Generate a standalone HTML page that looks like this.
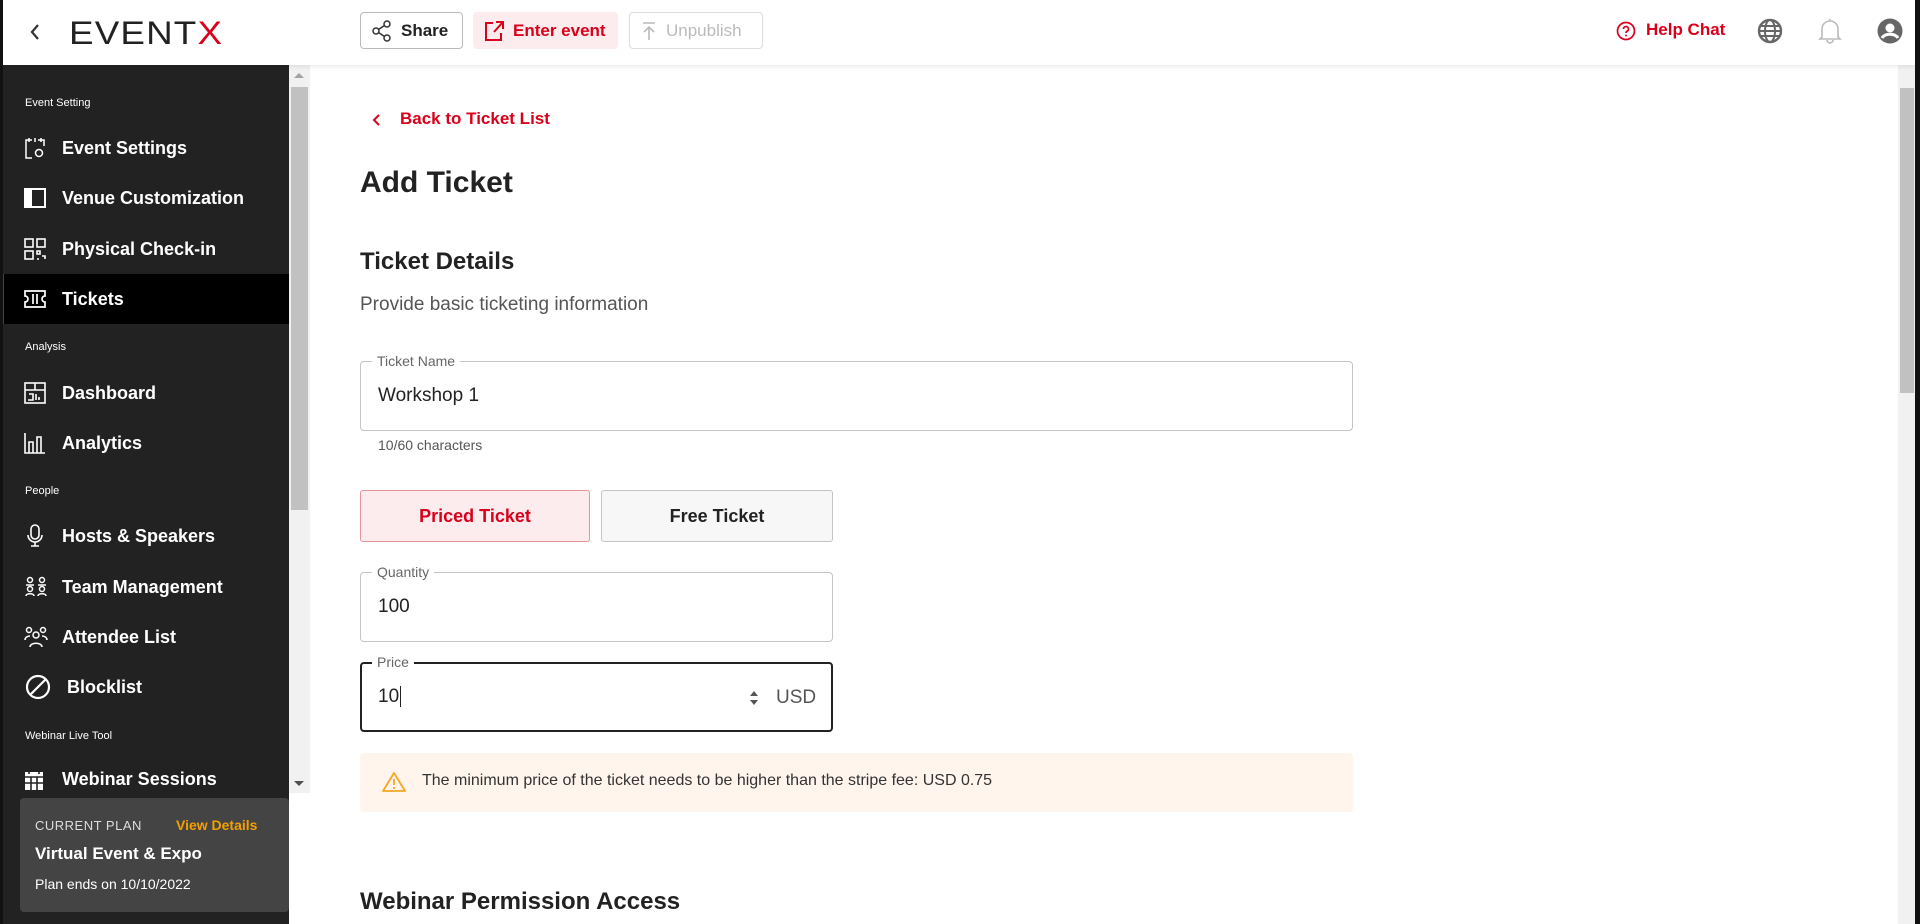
<!DOCTYPE html>
<html><head><meta charset="utf-8"><style>
*{box-sizing:border-box;margin:0;padding:0}
body{width:1920px;height:924px;overflow:hidden;background:#fff;font-family:"Liberation Sans",sans-serif;position:relative;color:#222}
.abs{position:absolute}
.hdr{left:0;top:0;width:1920px;height:65px;background:#fff;box-shadow:0 2px 4px rgba(0,0,0,.08);z-index:2}
.btn{position:absolute;top:12px;height:37px;border-radius:4px;display:flex;align-items:center;gap:9px;padding-left:11px;font-size:17px;font-weight:bold}
.side{left:0;top:65px;width:289px;height:859px;background:#222}
.sec{position:absolute;left:25px;color:#fff;font-size:11px}
.it{position:absolute;left:0;width:289px;height:50px;display:flex;align-items:center;color:#fff;font-weight:bold;font-size:18px}
.it svg{position:absolute;left:24px}
.it span{position:absolute;left:62px}
.field{position:absolute;border:1px solid #c4c4c4;border-radius:4px}
.lab{position:absolute;top:-9px;left:11px;background:#fff;padding:0 5px;font-size:14px;color:#666}
.val{position:absolute;left:17px;font-size:19px;color:#222}
</style></head><body>
<div class="abs" style="left:0;top:0;width:3px;height:924px;background:#111;z-index:5"></div>
<div class="abs" style="right:0;top:0;width:5px;height:924px;background:#111;z-index:5"></div>
<div class="abs hdr">
 <svg class="abs" style="left:28px;top:22px" width="14" height="20" viewBox="0 0 14 20"><path d="M10 3 L4 10 L10 17" fill="none" stroke="#333" stroke-width="2.2"/></svg>
 <div class="abs" style="left:69px;top:15px;font-size:32px;letter-spacing:1px;color:#222;font-weight:normal;transform:scaleX(1.15);transform-origin:left">EVENT<span style="color:#d9001b">X</span></div>
 <div class="btn" style="left:360px;width:103px;border:1px solid #bbb;color:#222"><svg width="20" height="22" viewBox="0 0 20 22"><circle cx="15" cy="4" r="3" fill="none" stroke="#333" stroke-width="1.5"/><circle cx="4" cy="11" r="3" fill="none" stroke="#333" stroke-width="1.5"/><circle cx="15" cy="18" r="3" fill="none" stroke="#333" stroke-width="1.5"/><path d="M6.5 9.5 L12.5 5.5 M6.5 12.5 L12.5 16.5" stroke="#333" stroke-width="1.5"/></svg>Share</div>
 <div class="btn" style="left:473px;width:145px;background:#fdecee;color:#d9001b"><svg width="20" height="22" viewBox="0 0 20 22"><path d="M9 3H2v17h15v-7" fill="none" stroke="#d9001b" stroke-width="2"/><path d="M10 12 L18 3 M12 2h7v7" fill="none" stroke="#d9001b" stroke-width="2"/></svg>Enter event</div>
 <div class="btn" style="left:629px;width:134px;border:1px solid #ddd;color:#bbb;font-weight:normal"><svg width="16" height="22" viewBox="0 0 16 22"><path d="M2 3h12M8 20V7M3 12l5-5 5 5" fill="none" stroke="#bbb" stroke-width="1.6"/></svg>Unpublish</div>
 <svg class="abs" style="left:1616px;top:21px" width="20" height="20" viewBox="0 0 20 20"><circle cx="10" cy="10" r="8.5" fill="none" stroke="#d9001b" stroke-width="1.7"/><path d="M7.5 8a2.5 2.5 0 1 1 3.5 2.3c-.8.4-1 .9-1 1.7" fill="none" stroke="#d9001b" stroke-width="1.7"/><circle cx="10" cy="14.5" r="1" fill="#d9001b"/></svg>
 <div class="abs" style="left:1646px;top:20px;font-size:17px;font-weight:bold;color:#d9001b">Help Chat</div>
 <svg class="abs" style="left:1757px;top:18px" width="26" height="26" viewBox="0 0 26 26"><circle cx="13" cy="13" r="11" fill="none" stroke="#666" stroke-width="2.4"/><ellipse cx="13" cy="13" rx="5" ry="11" fill="none" stroke="#666" stroke-width="2"/><path d="M2 13h22M4 8h18M4 18h18" stroke="#666" stroke-width="2"/></svg>
 <svg class="abs" style="left:1817px;top:17px" width="26" height="28" viewBox="0 0 26 28"><path d="M5 20V12a8 8 0 0 1 16 0v8l2 2H3z M13 2v2 M10 23a3 3 0 0 0 6 0" fill="none" stroke="#bbb" stroke-width="1.6"/></svg>
 <svg class="abs" style="left:1877px;top:18px" width="26" height="26" viewBox="0 0 26 26"><circle cx="13" cy="13" r="12.5" fill="#666"/><circle cx="13" cy="10" r="4.5" fill="#fff"/><path d="M5 20c3-5 13-5 16 0" fill="none" stroke="#fff" stroke-width="3"/></svg>
</div>

<div class="abs side">
 <div class="sec" style="top:32px">Event Setting</div>
 <div class="it" style="top:58px"><svg width="22" height="24" viewBox="0 0 22 24"><path d="M8 4H2v18h6 M14 4h6v6 M5 2v4 M11 2v4 M17 2v4" fill="none" stroke="#fff" stroke-width="1.5"/><circle cx="15" cy="17" r="3.5" fill="none" stroke="#fff" stroke-width="1.5"/></svg><span>Event Settings</span></div>
 <div class="it" style="top:108px"><svg width="22" height="22" viewBox="0 0 22 22"><rect x="1" y="2" width="20" height="18" fill="none" stroke="#fff" stroke-width="2"/><rect x="1" y="2" width="7" height="18" fill="#fff"/></svg><span>Venue Customization</span></div>
 <div class="it" style="top:159px"><svg width="22" height="22" viewBox="0 0 22 22"><g fill="none" stroke="#fff" stroke-width="1.6"><rect x="1" y="1" width="8" height="8"/><rect x="13" y="1" width="8" height="8"/><rect x="1" y="13" width="8" height="8"/><path d="M13 13h3v3h-3zM18 18h3v3M13 21h2"/></g></svg><span>Physical Check-in</span></div>
 <div class="it" style="top:209px;background:#000;border-left:4px solid #d9001b"><svg width="22" height="20" viewBox="0 0 22 20" style="left:20px"><path d="M1 2h20v5a3 3 0 0 0 0 6v5H1v-5a3 3 0 0 0 0-6z M9 5v10 M13 5v10" fill="none" stroke="#fff" stroke-width="1.7"/></svg><span style="left:58px">Tickets</span></div>
 <div class="sec" style="top:276px">Analysis</div>
 <div class="it" style="top:303px"><svg width="22" height="22" viewBox="0 0 22 22"><rect x="1" y="1" width="20" height="20" fill="none" stroke="#fff" stroke-width="1.6"/><path d="M1 8h20M11 1v7M5 12h4v6H4M12 12v6M15 15v3" fill="none" stroke="#fff" stroke-width="1.6"/></svg><span>Dashboard</span></div>
 <div class="it" style="top:353px"><svg width="22" height="22" viewBox="0 0 22 22"><path d="M1 1v20h20M5 21V10h4v11M13 21V5h4v16" fill="none" stroke="#fff" stroke-width="1.6"/></svg><span>Analytics</span></div>
 <div class="sec" style="top:420px">People</div>
 <div class="it" style="top:446px"><svg width="22" height="24" viewBox="0 0 22 24"><rect x="7" y="1" width="8" height="14" rx="4" fill="none" stroke="#fff" stroke-width="1.6"/><path d="M4 11a7 7 0 0 0 14 0M11 18v4M7 22h8" fill="none" stroke="#fff" stroke-width="1.6"/></svg><span>Hosts &amp; Speakers</span></div>
 <div class="it" style="top:497px"><svg width="24" height="22" viewBox="0 0 24 22"><g fill="none" stroke="#fff" stroke-width="1.5"><circle cx="6" cy="4" r="2.5"/><circle cx="18" cy="4" r="2.5"/><circle cx="6" cy="13" r="2.5"/><circle cx="18" cy="13" r="2.5"/><path d="M2 9h8M14 9h8M2 20c0-3 8-3 8 0M14 20c0-3 8-3 8 0"/></g></svg><span>Team Management</span></div>
 <div class="it" style="top:547px"><svg width="24" height="22" viewBox="0 0 24 22"><g fill="none" stroke="#fff" stroke-width="1.5"><circle cx="5" cy="4" r="2.5"/><circle cx="19" cy="4" r="2.5"/><circle cx="12" cy="9" r="3"/><path d="M1 14c0-3 3-4 5-4M23 14c0-3-3-4-5-4M6 21c0-5 12-5 12 0"/></g></svg><span>Attendee List</span></div>
 <div class="it" style="top:597px"><svg width="26" height="26" viewBox="0 0 26 26" style="left:25px"><circle cx="13" cy="13" r="11" fill="none" stroke="#fff" stroke-width="2.2"/><path d="M5 21L21 5" stroke="#fff" stroke-width="2.2"/></svg><span style="left:67px">Blocklist</span></div>
 <div class="sec" style="top:665px">Webinar Live Tool</div>
 <div class="it" style="top:690px;overflow:hidden;height:43px;align-items:flex-start"><svg width="20" height="22" viewBox="0 0 20 22" style="top:14px"><rect x="1" y="3" width="18" height="18" fill="#fff"/><path d="M5 0v5M15 0v5M1 8h18M7 8v13M13 8v13M1 14h18" stroke="#222" stroke-width="1.6"/></svg><span style="top:14px">Webinar Sessions</span></div>
 <div class="abs" style="left:289px;top:0;width:21px;height:728px;background:#f1f1f1"></div>
 <div class="abs" style="left:291px;top:22px;width:17px;height:423px;background:#c1c1c1"></div>
 <div class="abs" style="left:294px;top:8px;width:0;height:0;border-left:5px solid transparent;border-right:5px solid transparent;border-bottom:5px solid #a3a3a3"></div>
 <div class="abs" style="left:294px;top:716px;width:0;height:0;border-left:5px solid transparent;border-right:5px solid transparent;border-top:5px solid #505050"></div>
 <div class="abs" style="left:20px;top:733px;width:269px;height:114px;background:#444;border-radius:4px">
  <div class="abs" style="left:15px;top:20px;color:#ddd;font-size:13px;letter-spacing:.5px">CURRENT PLAN</div>
  <div class="abs" style="left:156px;top:19px;color:#f5a000;font-size:14px;font-weight:bold">View Details</div>
  <div class="abs" style="left:15px;top:46px;color:#fff;font-size:17px;font-weight:bold">Virtual Event &amp; Expo</div>
  <div class="abs" style="left:15px;top:78px;color:#fff;font-size:14px">Plan ends on 10/10/2022</div>
 </div>
</div>
<div class="abs" style="left:310px;top:65px;width:10px;height:859px;background:#fff"></div>

<div class="abs" style="left:1898px;top:65px;width:17px;height:859px;background:#f1f1f1"></div>
<div class="abs" style="left:1900px;top:88px;width:14px;height:305px;background:#c1c1c1"></div>

<svg class="abs" style="left:371px;top:112px" width="12" height="16" viewBox="0 0 12 16"><path d="M8 3L3 8l5 5" fill="none" stroke="#d9001b" stroke-width="2"/></svg>
<div class="abs" style="left:400px;top:109px;font-size:17px;color:#d9001b;font-weight:bold">Back to Ticket List</div>
<div class="abs" style="left:360px;top:166px;font-size:30px;font-weight:bold;color:#222">Add Ticket</div>
<div class="abs" style="left:360px;top:248px;font-size:24px;font-weight:bold;color:#222">Ticket Details</div>
<div class="abs" style="left:360px;top:294px;font-size:19px;color:#555">Provide basic ticketing information</div>

<div class="field" style="left:360px;top:361px;width:993px;height:70px"><div class="lab">Ticket Name</div><div class="val" style="top:23px">Workshop 1</div></div>
<div class="abs" style="left:378px;top:437px;font-size:14px;color:#555">10/60 characters</div>

<div class="abs" style="left:360px;top:490px;width:230px;height:52px;background:#fdecee;border:1px solid #e8939c;border-radius:3px;display:flex;align-items:center;justify-content:center;color:#d9001b;font-size:18px;font-weight:bold">Priced Ticket</div>
<div class="abs" style="left:601px;top:490px;width:232px;height:52px;background:#f7f7f7;border:1px solid #c4c4c4;border-radius:3px;display:flex;align-items:center;justify-content:center;color:#222;font-size:18px;font-weight:bold">Free Ticket</div>

<div class="field" style="left:360px;top:572px;width:473px;height:70px"><div class="lab">Quantity</div><div class="val" style="top:23px">100</div></div>
<div class="field" style="left:360px;top:662px;width:473px;height:70px;border:2px solid #222"><div class="lab" style="top:-10px;left:10px">Price</div><div class="val" style="top:22px;left:16px">10<span style="border-left:1px solid #222;margin-left:1px"></span></div>
 <svg class="abs" style="left:386px;top:24px" width="12" height="20" viewBox="0 0 12 20"><path d="M2 8l4-5 4 5zM2 12l4 5 4-5z" fill="#555"/></svg>
 <div class="abs" style="left:414px;top:23px;font-size:19px;color:#555">USD</div></div>

<div class="abs" style="left:360px;top:753px;width:993px;height:59px;background:#fff5ec;border-radius:3px">
 <svg class="abs" style="left:22px;top:18px" width="24" height="22" viewBox="0 0 24 22"><path d="M12 2L1 20h22z" fill="none" stroke="#f5a623" stroke-width="1.8" stroke-linejoin="round"/><path d="M12 8v6" stroke="#f5a623" stroke-width="1.8"/><circle cx="12" cy="17" r="1.1" fill="#f5a623"/></svg>
 <div class="abs" style="left:62px;top:19px;font-size:16px;color:#333">The minimum price of the ticket needs to be higher than the stripe fee: USD 0.75</div>
</div>
<div class="abs" style="left:360px;top:888px;font-size:24px;font-weight:bold;color:#222">Webinar Permission Access</div>
</body></html>
